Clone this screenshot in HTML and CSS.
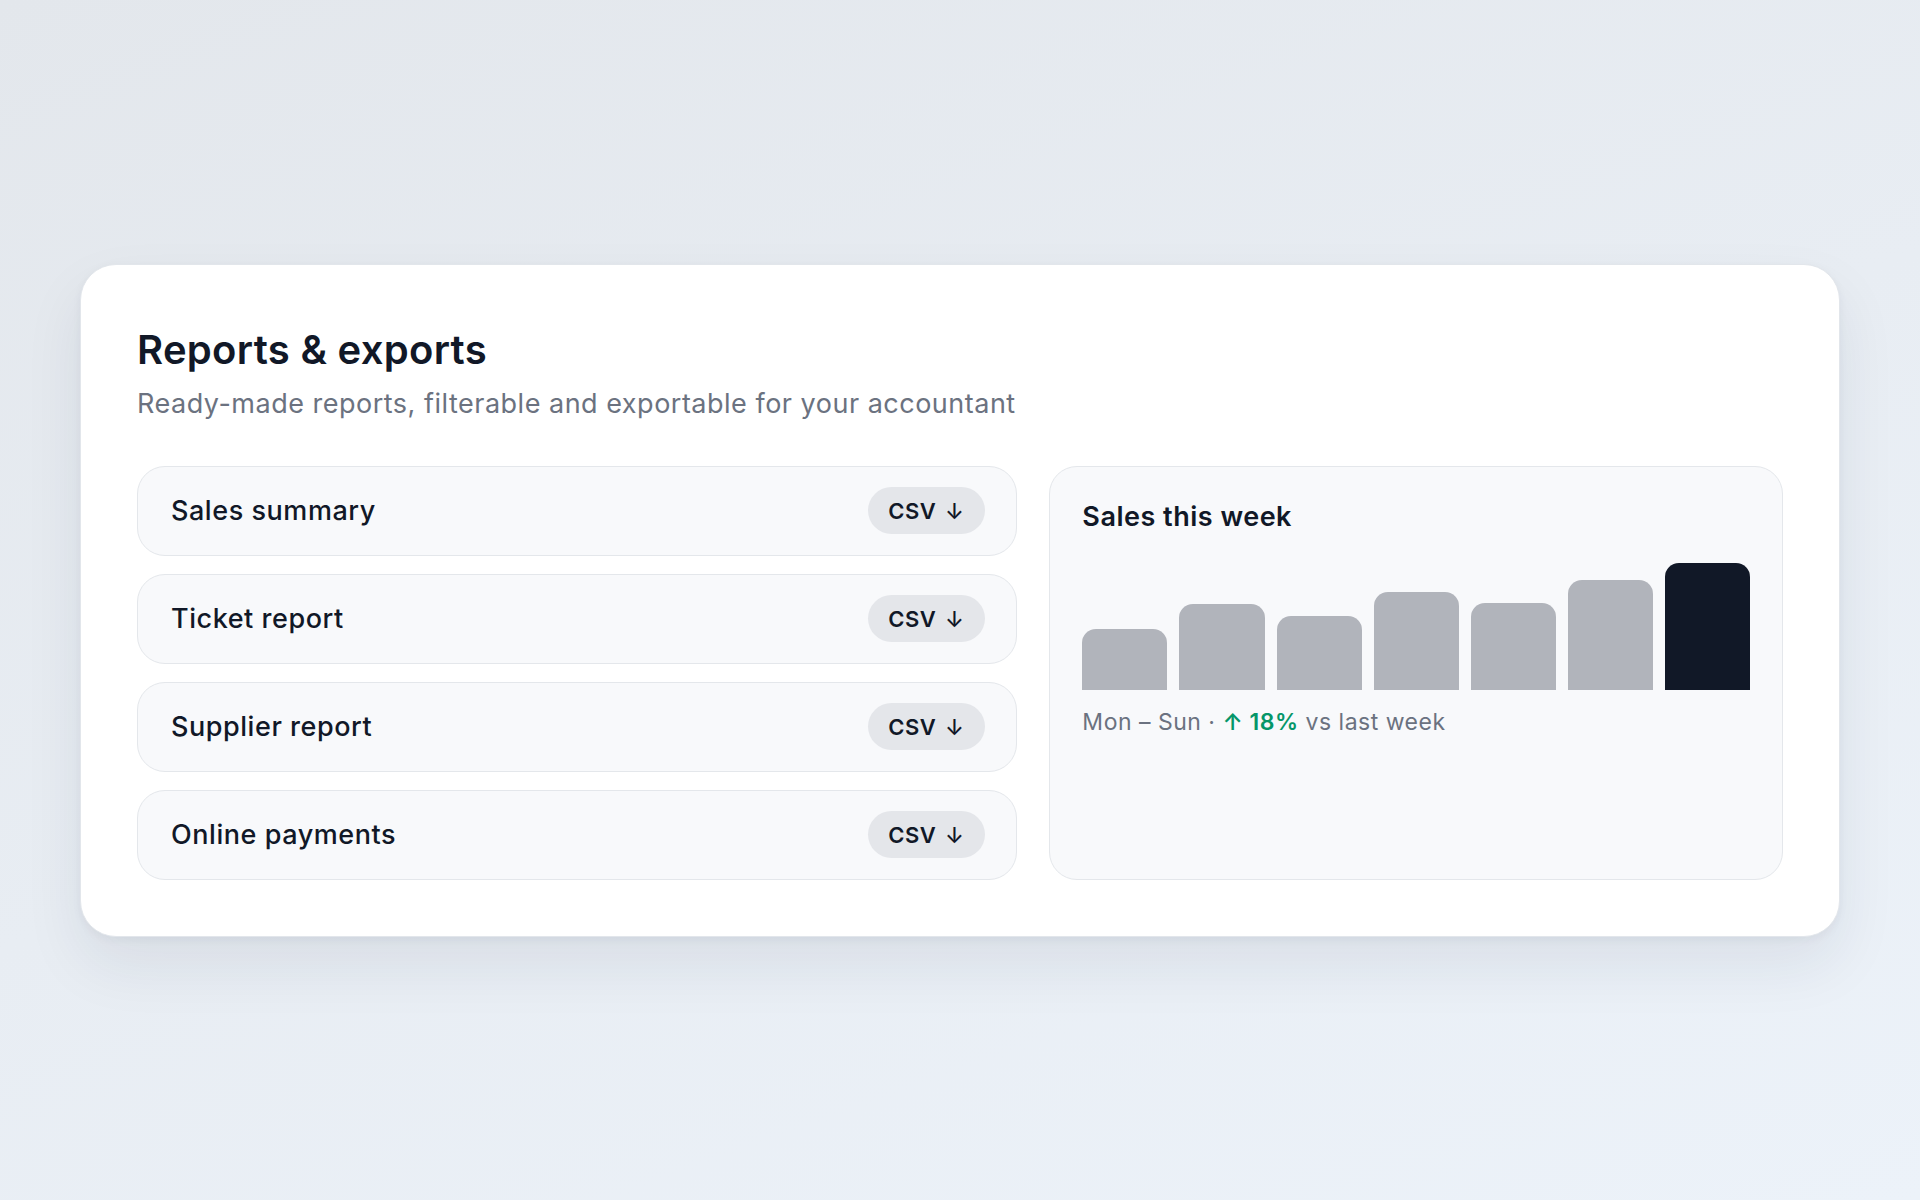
FILE: index.html
```html
<!DOCTYPE html>
<html lang="en">
<head>
<meta charset="utf-8">
<title>Reports &amp; exports</title>
<link rel="stylesheet" href="styles.css">
</head>
<body>
  <main class="stage">
    <section class="card">
      <header class="card-head">
        <h1 class="title">Reports &amp; exports</h1>
        <p class="subtitle">Ready-made reports, filterable and exportable for your accountant</p>
      </header>

      <div class="content">
        <ul class="report-list">
          <li class="report">
            <span class="report-name">Sales summary</span>
            <button class="export">CSV <span class="arrow">↓</span></button>
          </li>
          <li class="report">
            <span class="report-name">Ticket report</span>
            <button class="export">CSV <span class="arrow">↓</span></button>
          </li>
          <li class="report">
            <span class="report-name">Supplier report</span>
            <button class="export">CSV <span class="arrow">↓</span></button>
          </li>
          <li class="report">
            <span class="report-name">Online payments</span>
            <button class="export">CSV <span class="arrow">↓</span></button>
          </li>
        </ul>

        <div class="week-panel">
          <h2 class="panel-title">Sales this week</h2>
          <div class="bars">
            <div class="bar" style="height: 48%"></div>
            <div class="bar" style="height: 67%"></div>
            <div class="bar" style="height: 57.5%"></div>
            <div class="bar" style="height: 76.5%"></div>
            <div class="bar" style="height: 68.5%"></div>
            <div class="bar" style="height: 86%"></div>
            <div class="bar bar-current" style="height: 100%"></div>
          </div>
          <p class="caption">Mon – Sun · <span class="trend">↑ 18%</span> vs last week</p>
        </div>
      </div>
    </section>
  </main>
</body>
</html>
```

FILE: styles.css
```css
* {
  box-sizing: border-box;
}

html, body {
  margin: 0;
  padding: 0;
}

body {
  font-family: Inter, "Noto Sans", "Liberation Sans", sans-serif;
  color: #111827;
  background: linear-gradient(160deg, #e3e7ec 0%, #e8edf3 50%, #ecf2f9 100%);
  min-height: 1200px;
}

.stage {
  height: 1200px;
  display: flex;
  align-items: center;
  justify-content: center;
}

/* main card */
.card {
  width: 1760px;
  padding: 56px;
  background: #ffffff;
  border-radius: 36px;
  border: 1px solid #e2e6eb;
  box-shadow: 0 28px 60px rgba(30, 41, 59, 0.08), 0 3px 8px rgba(30, 41, 59, 0.05);
}

.card-head {
  padding-top: 3px;
}

.title {
  margin: 0;
  font-size: 40px;
  line-height: 52px;
  font-weight: 600;
  letter-spacing: 0.3px;
  color: #111827;
}

.subtitle {
  margin: 10px 0 0;
  font-size: 27px;
  line-height: 36px;
  font-weight: 400;
  letter-spacing: 0.5px;
  color: #6b7280;
}

.content {
  margin-top: 44px;
  display: grid;
  grid-template-columns: 1.2fr 1fr;
  gap: 32px;
}

/* report rows */
.report-list {
  list-style: none;
  margin: 0;
  padding: 0;
  display: flex;
  flex-direction: column;
  gap: 18px;
}

.report {
  height: 90px;
  display: flex;
  align-items: center;
  justify-content: space-between;
  padding: 0 31px 0 33px;
  background: #f8f9fb;
  border: 1.5px solid #e4e7eb;
  border-radius: 28px;
}

.report-name {
  font-size: 27px;
  font-weight: 500;
  letter-spacing: 0.55px;
  color: #111827;
}

.export {
  height: 47px;
  display: inline-flex;
  align-items: center;
  gap: 9px;
  padding: 0 21px 0 20px;
  border: none;
  border-radius: 999px;
  background: #e4e6ea;
  font-family: inherit;
  font-size: 22px;
  font-weight: 600;
  letter-spacing: 0.4px;
  color: #111827;
}

.arrow {
  font-weight: 500;
}

/* weekly chart panel */
.week-panel {
  padding: 32px;
  background: #f8f9fb;
  border: 1.5px solid #e4e7eb;
  border-radius: 28px;
}

.panel-title {
  margin: 0;
  font-size: 27px;
  line-height: 36px;
  font-weight: 600;
  letter-spacing: 0.5px;
  color: #111827;
}

.bars {
  margin-top: 28px;
  height: 127px;
  display: flex;
  align-items: flex-end;
  gap: 12px;
}

.bar {
  flex: 1;
  background: #b1b4bb;
  border-radius: 14px 14px 0 0;
}

.bar-current {
  background: #111827;
}

.caption {
  margin: 16px 0 0;
  font-size: 23px;
  line-height: 32px;
  letter-spacing: 0.5px;
  color: #6b7280;
}

.trend {
  color: #059669;
  font-weight: 600;
}
```
